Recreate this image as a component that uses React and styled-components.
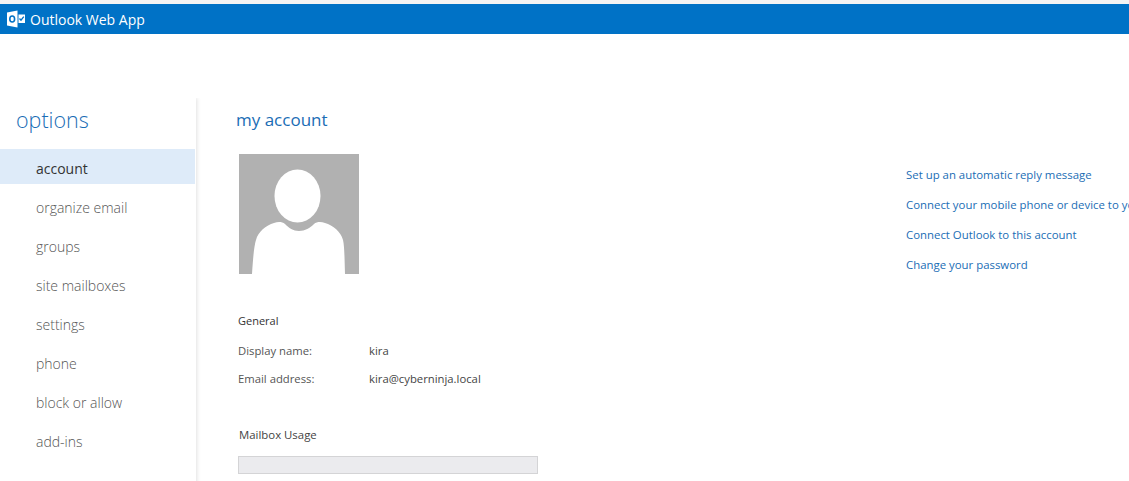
import styled, { createGlobalStyle } from "styled-components";

const GlobalStyle = createGlobalStyle`
    html, body {
        margin: 0;
        padding: 0;
        height: 100%;
        overflow: hidden;
        background-color: #ffffff;
    }
    body {
        font-family: "Open Sans", "Noto Sans", "Liberation Sans", sans-serif;
    }
`

const navItems = ["account", "organize email", "groups", "site mailboxes", "settings", "phone", "block or allow", "add-ins"];
const quickLinks = [
    "Set up an automatic reply message",
    "Connect your mobile phone or device to your account",
    "Connect Outlook to this account",
    "Change your password",
];

const OutlookLogo = () => (
    <svg width="18" height="18" viewBox="0 0 18 18">
        <path fill="#ffffff" d="M0 2.5 10.5 0.5V17.5L0 15.5Z" />
        <path fill="#ffffff" d="M11.5 4.5H18V13H11.5Z" />
        <ellipse cx="5.2" cy="9" rx="2.4" ry="3" fill="none" stroke="#0072c6" strokeWidth="1.6" />
        <path fill="none" stroke="#0072c6" strokeWidth="1.3" d="M12.5 8.5 14 10.2 16.8 6.6" />
    </svg>
);

const PersonPicture = () => (
    <svg width="120" height="120" viewBox="0 0 120 120" style={{ display: "block" }}>
        <rect width="120" height="120" fill="#b1b1b1" />
        <ellipse cx="58.5" cy="42" rx="23" ry="26.5" fill="#ffffff" />
        <path fill="#ffffff" d="M13 120C14 105 15 92 17 86 19 78 27 71 35 69 39 67.5 43 67.5 46 70 50 74 54 77 60 77 66 77 71 74 75 70 78 67.5 82 67.5 86 69 94 71 102 78 104 86 105.5 92 105.5 105 106 120Z" />
    </svg>
);

export default function App() {
    return (
        <Page>
            <GlobalStyle />
            <TopEdge />
            <Banner>
                <OutlookLogo />
                <BannerTitle>Outlook Web App</BannerTitle>
            </Banner>
            <Body>
                <SideNav>
                    <OptionsTitle>options</OptionsTitle>
                    {navItems.map((item, i) => (
                        <NavItem key={item} $active={i === 0}>{item}</NavItem>
                    ))}
                </SideNav>
                <Content>
                    <MainColumn>
                        <AccountTitle>my account</AccountTitle>
                        <Picture><PersonPicture /></Picture>
                        <SectionLabel>General</SectionLabel>
                        <InfoList>
                            <InfoRow>
                                <InfoLabel>Display name:</InfoLabel>
                                <InfoValue>kira</InfoValue>
                            </InfoRow>
                            <InfoRow>
                                <InfoLabel>Email address:</InfoLabel>
                                <InfoValue>kira@cyberninja.local</InfoValue>
                            </InfoRow>
                        </InfoList>
                        <UsageLabel>Mailbox Usage</UsageLabel>
                        <UsageBar />
                    </MainColumn>
                    <LinkColumn>
                        {quickLinks.map((link) => (
                            <QuickLink key={link}>{link}</QuickLink>
                        ))}
                    </LinkColumn>
                </Content>
            </Body>
        </Page>
    );
}

const Page = styled.div`
    width: 1129px;
    height: 481px;
    overflow: hidden;
    background-color: #ffffff;
`

const TopEdge = styled.div`
    height: 4px;
    background-color: #f4f4f4;
`

const Banner = styled.div`
    display: flex;
    align-items: center;
    gap: 5px;
    height: 30px;
    padding-left: 7px;
    background-color: #0072c6;
`

const BannerTitle = styled.span`
    font-size: 14px;
    color: #ffffff;
    white-space: nowrap;
`

const Body = styled.div`
    display: flex;
    margin-top: 64px;
`

const SideNav = styled.nav`
    width: 196px;
    height: 400px;
    flex-shrink: 0;
    box-shadow: 1px 0 4px rgba(0, 0, 0, 0.12);
    clip-path: inset(0 -8px 0 0);
`

const OptionsTitle = styled.h1`
    margin: 0;
    height: 51px;
    padding: 8px 0 0 16px;
    box-sizing: border-box;
    font-size: 21.5px;
    line-height: 28px;
    font-weight: 300;
    color: #1a6db5;
`

const NavItem = styled.div`
    display: flex;
    align-items: center;
    height: 35px;
    margin: 0 1px 4px 0;
    padding: 3px 0 0 36px;
    box-sizing: border-box;
    font-size: 14px;
    font-weight: ${(p) => (p.$active ? 400 : 300)};
    color: ${(p) => (p.$active ? "#333333" : "#555555")};
    background-color: ${(p) => (p.$active ? "#deebf9" : "transparent")};
`

const Content = styled.div`
    display: flex;
    flex: 1;
    min-width: 0;
`

const MainColumn = styled.div`
    width: 710px;
    flex-shrink: 0;
    padding-left: 40px;
    box-sizing: border-box;
`

const AccountTitle = styled.h2`
    margin: 0;
    height: 56px;
    padding-top: 11px;
    box-sizing: border-box;
    font-size: 17px;
    line-height: 22px;
    font-weight: 400;
    color: #1a6db5;
`

const Picture = styled.div`
    margin-left: 3px;
    width: 120px;
`

const SectionLabel = styled.div`
    margin: 39px 0 0 2px;
    height: 16px;
    font-size: 11px;
    line-height: 16px;
    color: #333333;
`

const InfoList = styled.div`
    margin: 7px 0 0 2px;
`

const InfoRow = styled.div`
    display: flex;
    height: 28px;
    align-items: center;
`

const InfoLabel = styled.span`
    width: 131px;
    font-size: 11.3px;
    color: #555555;
`

const InfoValue = styled.span`
    font-size: 11.3px;
    color: #444444;
`

const UsageLabel = styled.div`
    margin: 35px 0 0 3px;
    height: 16px;
    font-size: 11.4px;
    line-height: 16px;
    color: #444444;
`

const UsageBar = styled.div`
    width: 300px;
    height: 18px;
    margin: 13px 0 0 2px;
    box-sizing: border-box;
    border: 1px solid #d4d4d6;
    background-color: #ebebee;
`

const LinkColumn = styled.div`
    display: flex;
    flex-direction: column;
    gap: 15px;
    min-width: 0;
    padding-top: 69px;
`

const QuickLink = styled.a`
    display: block;
    height: 15px;
    font-size: 11.4px;
    line-height: 15px;
    color: #1a6db5;
    white-space: nowrap;
`
